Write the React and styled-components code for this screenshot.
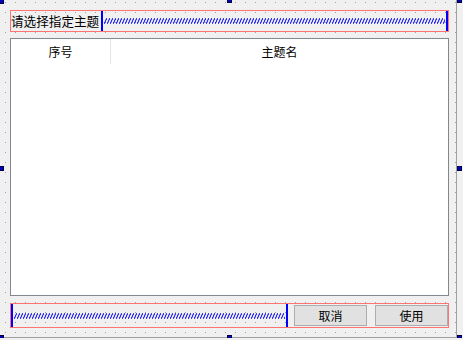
import React from 'react';
import styled, { createGlobalStyle } from 'styled-components';

const GlobalStyle = createGlobalStyle`
  html, body {
    margin: 0;
    padding: 0;
    background: #f0f0f0;
  }
  body {
    font-family: "Noto Sans CJK SC", "Liberation Sans", sans-serif;
    font-size: 12px;
    color: #000;
  }
`;

const Form = styled.div`
  position: relative;
  box-sizing: border-box;
  width: 457px;
  height: 338px;
  padding: 10px 7px 9px 10px;
  display: flex;
  flex-direction: column;
  background-color: #f0f0f0;
  background-image: conic-gradient(at 1px 1px, transparent 270deg, #a0a0a0 270deg);
  background-size: 10px 10px;
  background-position: 5px 2px;
  border-right: 1px solid #a0a0a0;
  border-bottom: 1px solid #a0a0a0;
`;

const LayoutBox = styled.div`
  box-sizing: border-box;
  height: ${p => p.$h}px;
  border: 1px solid #ff7373;
  display: flex;
  align-items: stretch;
  margin-top: ${p => p.$mt || 0}px;
`;

const Label = styled.div`
  width: 90px;
  display: flex;
  align-items: center;
  font-size: 12.6px;
  white-space: nowrap;
  overflow: hidden;
`;

const SpacerWrap = styled.div`
  flex: ${p => (p.$w ? `0 0 ${p.$w}px` : 1)};
  display: flex;
  align-items: center;
  border-left: 2px solid #0000ff;
  border-right: 2px solid #0000ff;
  box-sizing: border-box;
  padding: 0 1px;
`;

const Spring = ({ id }) => (
  <svg width="100%" height="6" style={{ display: 'block' }}>
    <defs>
      <pattern id={id} width="3" height="6" patternUnits="userSpaceOnUse">
        <path d="M0.5 5.5 L2.5 0.5 M2.5 0.5 L2.5 1.5 M0.5 4.5 L0.5 5.5" stroke="#0000ff" strokeWidth="1" fill="none" />
      </pattern>
    </defs>
    <rect width="100%" height="6" fill={`url(#${id})`} />
  </svg>
);

const Table = styled.div`
  box-sizing: border-box;
  margin-top: 6px;
  height: 259px;
  border: 1px solid #828790;
  background: #fff;
`;

const HeaderRow = styled.div`
  display: flex;
  height: 25px;
`;

const HeaderCell = styled.div`
  flex: ${p => (p.$w ? `0 0 ${p.$w}px` : 1)};
  display: flex;
  align-items: center;
  justify-content: center;
  font-size: 12px;
  border-right: ${p => (p.$divider ? '1px solid #e5e5e5' : 'none')};
  box-sizing: border-box;
`;

const Buttons = styled.div`
  display: flex;
  align-items: center;
  gap: 8px;
  margin-left: 6px;
  padding-right: 1px;
`;

const Button = styled.button`
  box-sizing: border-box;
  width: 73px;
  height: 21px;
  border: 1px solid #adadad;
  background: #e1e1e1;
  font-family: "Noto Sans CJK SC", "Liberation Sans", sans-serif;
  font-size: 12px;
  color: #000;
  padding: 0;
  display: flex;
  align-items: center;
  justify-content: center;
`;

const Handle = styled.div`
  position: absolute;
  width: 5px;
  height: 5px;
  box-sizing: border-box;
  background: #0000c0;
  border: 1px solid #000040;
  left: ${p => p.$x}px;
  top: ${p => p.$y}px;
`;

const handles = [
  [-1, -1], [227, -2], [457, -2],
  [-1, 166], [457, 166],
  [-1, 335], [227, 335], [457, 335],
];

export default function App() {
  return (
    <>
      <GlobalStyle />
      <Form>
        <LayoutBox $h={22}>
          <Label>请选择指定主题</Label>
          <SpacerWrap>
            <Spring id="spring-top" />
          </SpacerWrap>
        </LayoutBox>
        <Table>
          <HeaderRow>
            <HeaderCell $w={100} $divider>序号</HeaderCell>
            <HeaderCell>主题名</HeaderCell>
          </HeaderRow>
        </Table>
        <LayoutBox $h={25} $mt={7}>
          <SpacerWrap $w={277}>
            <Spring id="spring-bottom" />
          </SpacerWrap>
          <Buttons>
            <Button>取消</Button>
            <Button>使用</Button>
          </Buttons>
        </LayoutBox>
        {handles.map(([x, y], i) => (
          <Handle key={i} $x={x} $y={y} />
        ))}
      </Form>
    </>
  );
}
